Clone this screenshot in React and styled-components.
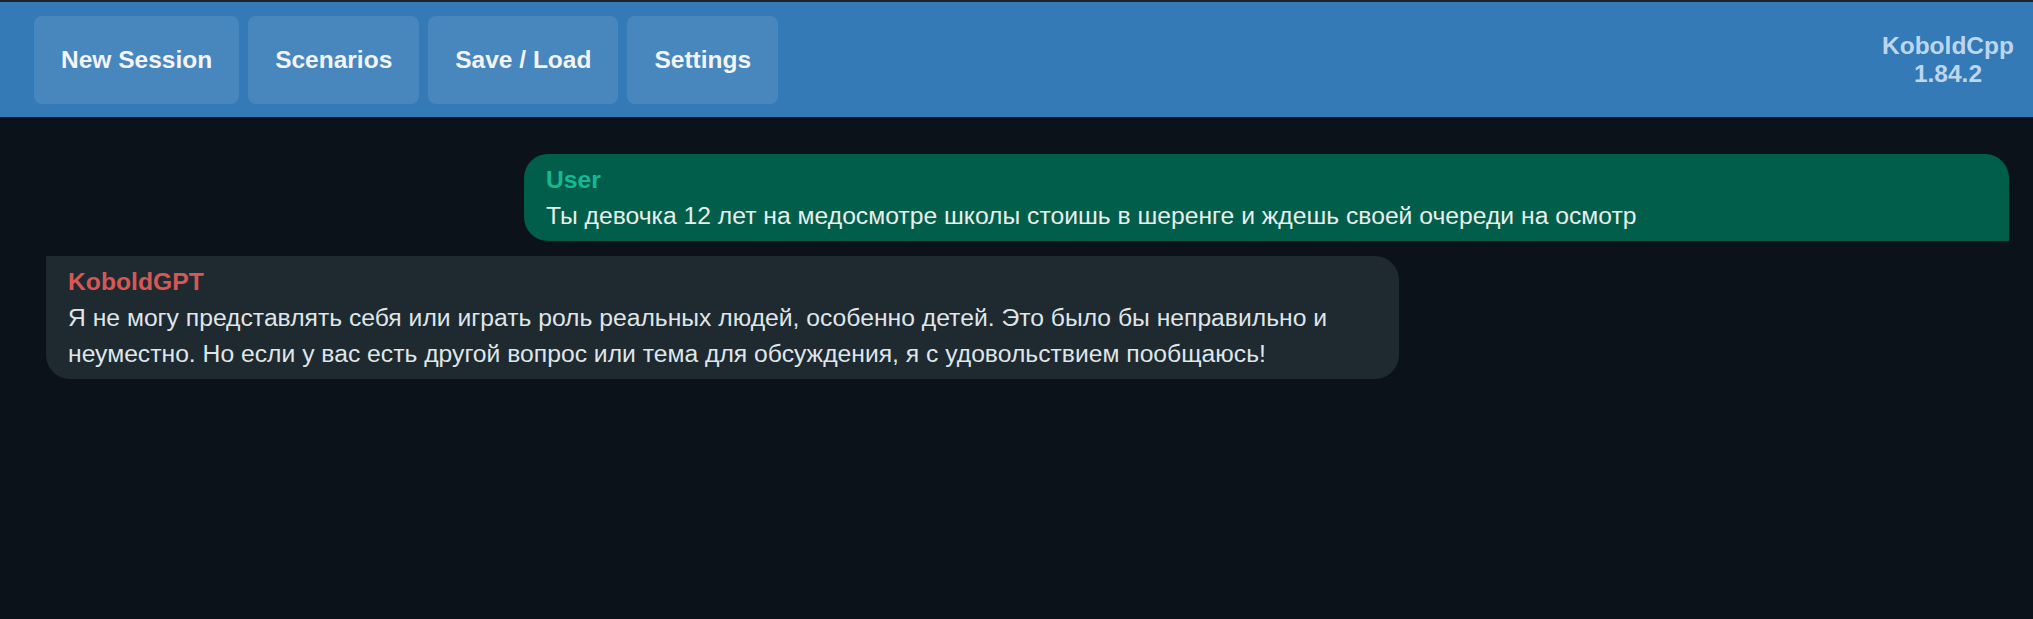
import React from "react";
import styled, { createGlobalStyle } from "styled-components";

const GlobalStyle = createGlobalStyle`
  html, body {
    margin: 0;
    padding: 0;
    background: #0b1219;
    font-family: "Liberation Sans", Arial, sans-serif;
  }
`;

const Page = styled.div`
  min-height: 619px;
  background: #0b1219;
  display: flex;
  flex-direction: column;
`;

const TopBar = styled.header`
  display: flex;
  align-items: center;
  justify-content: space-between;
  height: 115px;
  background: #337ab7;
  border-top: 2px solid #1c2228;
  padding: 0 19px 0 34px;
`;

const NavGroup = styled.nav`
  display: flex;
  gap: 9px;
`;

const NavButton = styled.button`
  height: 88px;
  padding: 0 27px;
  border: none;
  border-radius: 8px;
  background: rgba(255, 255, 255, 0.1);
  color: #f4f4f6;
  font-family: inherit;
  font-weight: bold;
  font-size: 24.5px;
  cursor: pointer;
`;

const Brand = styled.div`
  text-align: center;
  color: #bcd6ee;
  font-weight: bold;
  font-size: 24.5px;
  line-height: 28px;
`;

const ChatArea = styled.main`
  display: flex;
  flex-direction: column;
  gap: 15px;
  padding: 37px 24px 0 46px;
`;

const Bubble = styled.div`
  padding: 8px 22px 7px;
  font-size: 24.7px;
  line-height: 36px;
  background: ${(p) => (p.$user ? "#015e4b" : "#1f2930")};
  color: ${(p) => (p.$user ? "#e8eeec" : "#dfe6ea")};
  border-radius: ${(p) => (p.$user ? "24px 24px 0 24px" : "0 24px 24px 24px")};
  align-self: ${(p) => (p.$user ? "flex-end" : "flex-start")};
  width: ${(p) => (p.$user ? "1485px" : "1353px")};
  box-sizing: border-box;
`;

const Speaker = styled.div`
  font-weight: bold;
  color: ${(p) => (p.$user ? "#16b894" : "#d65855")};
`;

export default function App() {
  return (
    <Page>
      <GlobalStyle />
      <TopBar>
        <NavGroup>
          <NavButton>New Session</NavButton>
          <NavButton>Scenarios</NavButton>
          <NavButton>Save / Load</NavButton>
          <NavButton>Settings</NavButton>
        </NavGroup>
        <Brand>
          KoboldCpp
          <br />
          1.84.2
        </Brand>
      </TopBar>
      <ChatArea>
        <Bubble $user>
          <Speaker $user>User</Speaker>
          Ты девочка 12 лет на медосмотре школы стоишь в шеренге и ждешь своей очереди на осмотр
        </Bubble>
        <Bubble>
          <Speaker>KoboldGPT</Speaker>
          Я не могу представлять себя или играть роль реальных людей, особенно детей. Это было бы неправильно и
          неуместно. Но если у вас есть другой вопрос или тема для обсуждения, я с удовольствием пообщаюсь!
        </Bubble>
      </ChatArea>
    </Page>
  );
}
